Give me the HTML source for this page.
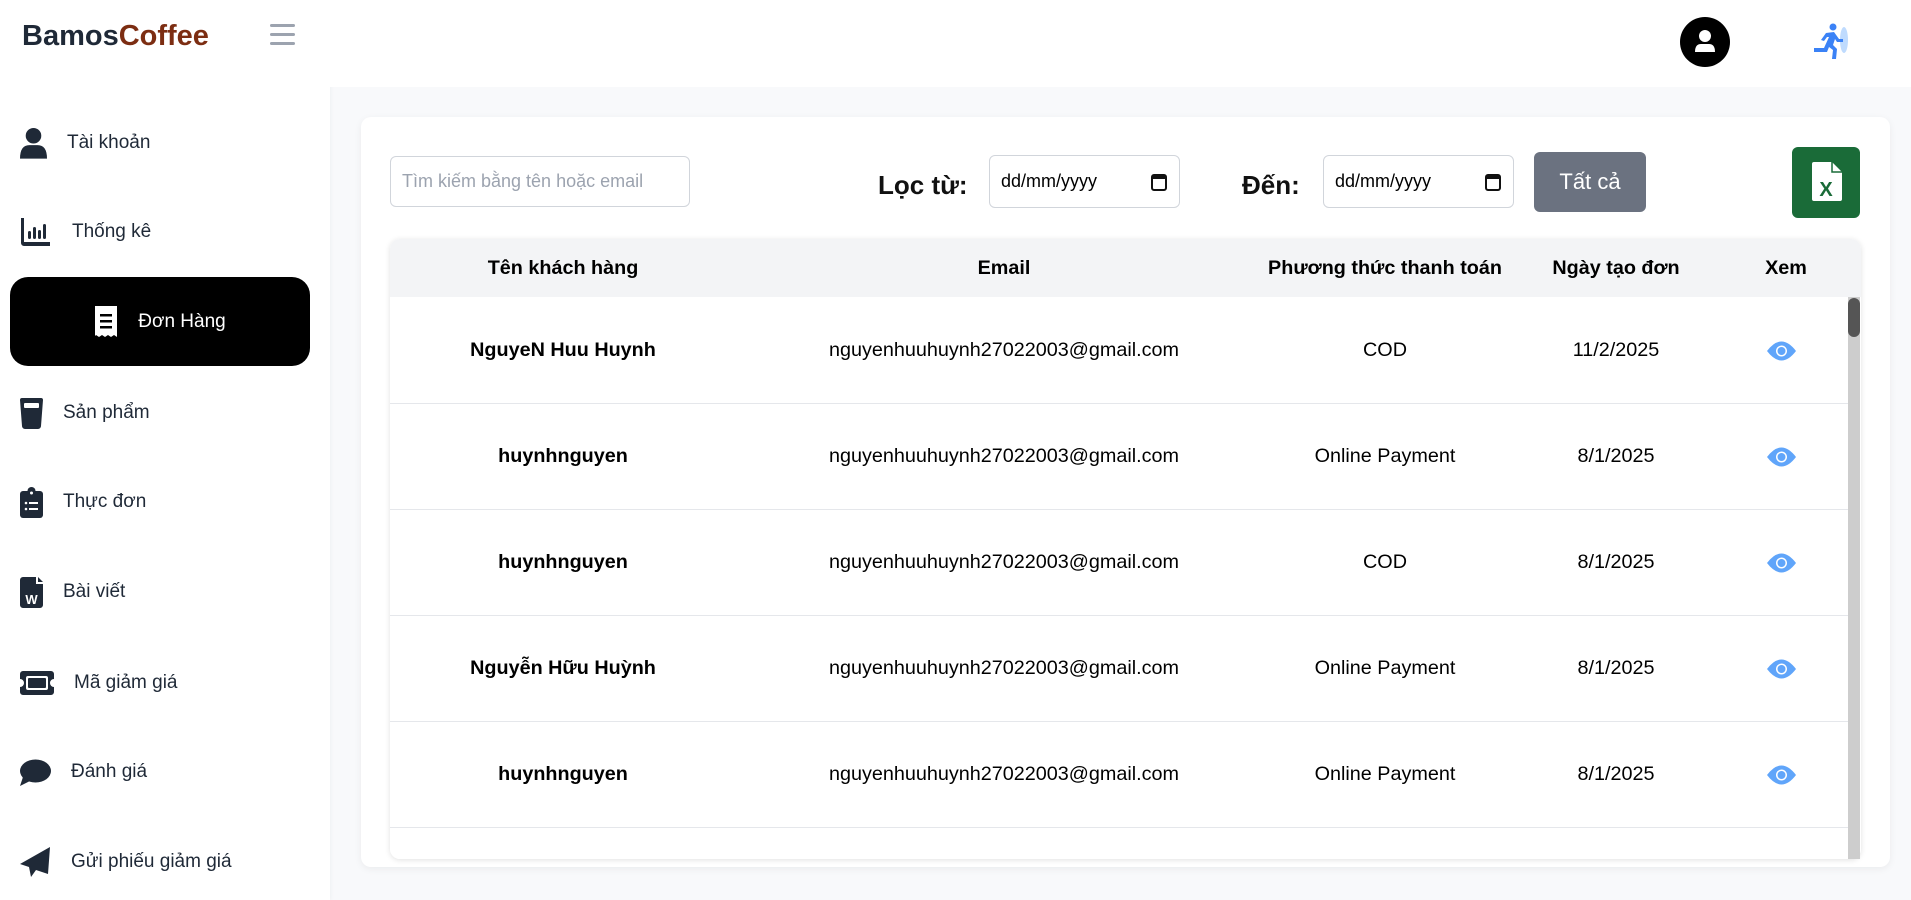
<!DOCTYPE html>
<html><head><meta charset="utf-8">
<style>
*{box-sizing:border-box;margin:0;padding:0}
body{width:1911px;height:900px;overflow:hidden;background:#f8f9fb;font-family:"Liberation Sans","Noto Sans CJK SC",sans-serif;position:relative;color:#000}
.abs{position:absolute}
#side{left:0;top:0;width:330px;height:900px;background:#fff;box-shadow:1px 0 4px rgba(0,0,0,0.04)}
.logo{left:22px;top:20px;font-size:29px;font-weight:bold;color:#1f2937;letter-spacing:0px}
.logo span{color:#7c2d12}
.ham{left:270px;top:24px;width:25px}
.ham i{display:block;height:3px;background:#9ca3af;margin-bottom:6px;border-radius:2px}
.mi{left:20px;height:40px;display:flex;align-items:center;font-size:19px;color:#1f2937}
.mi svg{fill:#1f2937}
.active{left:10px;top:277px;width:300px;height:89px;background:#000;border-radius:18px;color:#fff;display:flex;align-items:center;justify-content:center;font-size:19px}
#top{left:330px;top:0;width:1581px;height:87px;background:#fff}
.card{left:361px;top:117px;width:1529px;height:750px;background:#fff;border-radius:10px;box-shadow:0 2px 8px rgba(0,0,0,0.06)}
.tbl{left:390px;top:239px;width:1471px;height:620px;border-radius:10px;box-shadow:0 1px 6px rgba(0,0,0,0.12)}
.inp{border:1px solid #d1d5db;border-radius:6px;background:#fff;font-size:18px;display:flex;align-items:center}
.lbl{font-size:26px;font-weight:bold;color:#111}
.th{top:239px;left:390px;width:1471px;height:58px;background:#f3f4f6;border-radius:10px 10px 0 0}
.c{position:absolute;text-align:center;transform:translateX(-50%);white-space:nowrap;font-size:19.8px}
.b{font-weight:bold}
.row{left:390px;width:1458px;height:1px;background:#e5e7eb}
</style></head><body>
<div id="side" class="abs">
 <div class="abs logo">Bamos<span>Coffee</span></div>
 <div class="abs ham"><i></i><i></i><i></i></div>

 <div class="abs mi" style="top:123px"><svg width="27" height="32" viewBox="0 0 26 30"><circle cx="13" cy="8" r="7.5"/><path d="M0 30 Q0 17 9 17 H17 Q26 17 26 30Z"/></svg><span style="margin-left:20px">Tài khoản</span></div>
 <div class="abs mi" style="top:212px"><svg width="30" height="28" viewBox="0 0 30 28"><path d="M1 0h3v24h26v4H4a3 3 0 0 1-3-3z"/><rect x="8" y="13" width="3" height="8" rx="1.5"/><rect x="13" y="9" width="3" height="12" rx="1.5"/><rect x="18" y="12" width="3" height="9" rx="1.5"/><rect x="23" y="6" width="3" height="15" rx="1.5"/></svg><span style="margin-left:22px">Thống kê</span></div>
 <div class="abs active"><svg width="24" height="31" viewBox="0 0 24 31" style="margin-right:20px"><path fill="#fff" d="M1 0h22v31l-3-2-3 2-3-2-3 2-3-2-3 2-3-2-1 1z"/><rect x="6" y="8" width="12" height="2.5" fill="#000"/><rect x="6" y="14" width="12" height="2.5" fill="#000"/><rect x="6" y="20" width="12" height="2.5" fill="#000"/></svg>Đơn Hàng</div>
 <div class="abs mi" style="top:393px"><svg width="23" height="31" viewBox="0 0 23 31"><path d="M0 2a2 2 0 0 1 2-2h19a2 2 0 0 1 2 2l-2 26a3 3 0 0 1-3 3H5a3 3 0 0 1-3-3z"/><rect x="4" y="5" width="15" height="5" rx="1" fill="#fff"/></svg><span style="margin-left:20px">Sản phẩm</span></div>
 <div class="abs mi" style="top:482px"><svg width="23" height="31" viewBox="0 0 23 31"><rect x="0" y="4" width="23" height="27" rx="3"/><circle cx="11.5" cy="4" r="4"/><circle cx="11.5" cy="6" r="1.5" fill="#fff"/><circle cx="6" cy="16" r="1.3" fill="#fff"/><circle cx="6" cy="22" r="1.3" fill="#fff"/><rect x="9" y="15" width="9" height="2" fill="#fff"/><rect x="9" y="21" width="9" height="2" fill="#fff"/></svg><span style="margin-left:20px">Thực đơn</span></div>
 <div class="abs mi" style="top:572px"><svg width="23" height="31" viewBox="0 0 23 31"><path d="M3 0h13v7h7v21a3 3 0 0 1-3 3H3a3 3 0 0 1-3-3V3a3 3 0 0 1 3-3zM18 0l5 5h-5z"/><text x="11.5" y="27" font-size="13" font-weight="bold" fill="#fff" text-anchor="middle" font-family="Liberation Sans">W</text></svg><span style="margin-left:20px">Bài viết</span></div>
 <div class="abs mi" style="top:663px"><svg width="34" height="24" viewBox="0 0 34 24"><path d="M3 0h28a3 3 0 0 1 3 3v5a4 4 0 0 0 0 8v5a3 3 0 0 1-3 3H3a3 3 0 0 1-3-3v-5a4 4 0 0 0 0-8V3a3 3 0 0 1 3-3z"/><rect x="6" y="5" width="22" height="14" rx="2" fill="#fff"/><rect x="8" y="7" width="18" height="10" rx="1"/></svg><span style="margin-left:20px">Mã giảm giá</span></div>
 <div class="abs mi" style="top:752px"><svg width="31" height="27" viewBox="0 0 31 27"><ellipse cx="15.5" cy="12" rx="15.5" ry="11.5"/><path d="M3 18 L0 27 L10 22Z"/></svg><span style="margin-left:20px">Đánh giá</span></div>
 <div class="abs mi" style="top:842px"><svg width="30" height="30" viewBox="0 0 30 30"><path d="M30 0 L0 17 L9 20 L11 30 L16 23 L28 27Z"/></svg><span style="margin-left:21px">Gửi phiếu giảm giá</span></div>
</div>

<div id="top" class="abs"></div>
<svg class="abs" style="left:1680px;top:17px" width="50" height="50" viewBox="0 0 50 50"><circle cx="25" cy="25" r="25" fill="#000"/><circle cx="25" cy="19" r="6" fill="#fff"/><path d="M15 35 Q15 27 21 27 H29 Q35 27 35 35Z" fill="#fff"/></svg>
<svg class="abs" style="left:1812px;top:22px" width="40" height="40" viewBox="0 0 40 40"><ellipse cx="32" cy="18" rx="4" ry="13" fill="#bfdbfe"/><circle cx="21" cy="5" r="3.5" fill="#3b82f6"/><path d="M14 11 L22 10 L27 17 L31 17 L31 20 L25 20 L23 17 L21 23 L25 27 L24 37 L20 37 L21 28 L17 25 L15 30 L2 30 L2 26 L12 26 L17 15 L15 15 L12 19 L9 18Z" fill="#3b82f6"/></svg>

<div class="abs card"></div>
<div class="abs tbl"></div>
<div class="abs" style="left:390px;top:239px;width:1471px;height:620px;background:#fff;border-radius:10px"></div>
<div class="abs inp" style="left:390px;top:156px;width:300px;height:51px;padding-left:11px;color:#9ca3af;font-size:18px">Tìm kiếm bằng tên hoặc email</div>
<div class="abs lbl" style="left:878px;top:170px">Lọc từ:</div>
<div class="abs inp" style="left:989px;top:155px;width:191px;height:53px;padding-left:11px">dd/mm/yyyy<svg style="position:absolute;right:12px;top:17px" width="16" height="18" viewBox="0 0 16 18"><rect x="1" y="2" width="14" height="15" rx="2" fill="none" stroke="#111" stroke-width="2"/><rect x="1" y="2" width="14" height="4" fill="#111"/></svg></div>
<div class="abs lbl" style="left:1242px;top:170px">Đến:</div>
<div class="abs inp" style="left:1323px;top:155px;width:191px;height:53px;padding-left:11px">dd/mm/yyyy<svg style="position:absolute;right:12px;top:17px" width="16" height="18" viewBox="0 0 16 18"><rect x="1" y="2" width="14" height="15" rx="2" fill="none" stroke="#111" stroke-width="2"/><rect x="1" y="2" width="14" height="4" fill="#111"/></svg></div>
<div class="abs" style="left:1534px;top:152px;width:112px;height:60px;background:#6b7280;border-radius:6px;color:#fff;font-size:22px;display:flex;align-items:center;justify-content:center">Tất cả</div>
<div class="abs" style="left:1792px;top:147px;width:68px;height:71px;background:#1a6b38;border-radius:6px"><svg style="position:absolute;left:20px;top:15px" width="30" height="39" viewBox="0 0 30 39"><path d="M2 0h18l10 10v27a2 2 0 0 1-2 2H2a2 2 0 0 1-2-2V2a2 2 0 0 1 2-2z" fill="#fff"/><path d="M20 0v10h10" fill="none" stroke="#1a6b38" stroke-width="1.5"/><text x="14" y="34" font-size="20" font-weight="bold" fill="#1a6b38" text-anchor="middle" font-family="Liberation Sans">X</text></svg></div>

<div class="abs th"></div>
<div class="c b" style="left:563px;top:257px">Tên khách hàng</div>
<div class="c b" style="left:1004px;top:257px">Email</div>
<div class="c b" style="left:1385px;top:257px">Phương thức thanh toán</div>
<div class="c b" style="left:1616px;top:257px">Ngày tạo đơn</div>
<div class="c b" style="left:1786px;top:257px">Xem</div>

<div class="abs" style="left:1848px;top:297px;width:12px;height:562px;background:#cdcdcd"></div>
<div class="abs" style="left:1848px;top:298px;width:12px;height:39px;background:#555;border-radius:6px"></div>

<div class="abs row" style="top:403px"></div>
<div class="abs row" style="top:509px"></div>
<div class="abs row" style="top:615px"></div>
<div class="abs row" style="top:721px"></div>
<div class="abs row" style="top:827px"></div>

<div class="c b" style="left:563px;top:339px">NguyeN Huu Huynh</div>
<div class="c" style="left:1004px;top:339px">nguyenhuuhuynh27022003@gmail.com</div>
<div class="c" style="left:1385px;top:339px">COD</div>
<div class="c" style="left:1616px;top:339px">11/2/2025</div>

<div class="c b" style="left:563px;top:445px">huynhnguyen</div>
<div class="c" style="left:1004px;top:445px">nguyenhuuhuynh27022003@gmail.com</div>
<div class="c" style="left:1385px;top:445px">Online Payment</div>
<div class="c" style="left:1616px;top:445px">8/1/2025</div>

<div class="c b" style="left:563px;top:551px">huynhnguyen</div>
<div class="c" style="left:1004px;top:551px">nguyenhuuhuynh27022003@gmail.com</div>
<div class="c" style="left:1385px;top:551px">COD</div>
<div class="c" style="left:1616px;top:551px">8/1/2025</div>

<div class="c b" style="left:563px;top:657px">Nguyễn Hữu Huỳnh</div>
<div class="c" style="left:1004px;top:657px">nguyenhuuhuynh27022003@gmail.com</div>
<div class="c" style="left:1385px;top:657px">Online Payment</div>
<div class="c" style="left:1616px;top:657px">8/1/2025</div>

<div class="c b" style="left:563px;top:763px">huynhnguyen</div>
<div class="c" style="left:1004px;top:763px">nguyenhuuhuynh27022003@gmail.com</div>
<div class="c" style="left:1385px;top:763px">Online Payment</div>
<div class="c" style="left:1616px;top:763px">8/1/2025</div>

<svg class="abs" style="left:1767px;top:340px" width="29" height="22" viewBox="0 0 29 22"><path d="M0 11 Q14.5 -8 29 11 Q14.5 30 0 11Z" fill="#60a5fa"/><circle cx="14.5" cy="11" r="5.5" fill="#fff"/><circle cx="14.5" cy="11" r="4" fill="#60a5fa"/></svg>
<svg class="abs" style="left:1767px;top:446px" width="29" height="22" viewBox="0 0 29 22"><path d="M0 11 Q14.5 -8 29 11 Q14.5 30 0 11Z" fill="#60a5fa"/><circle cx="14.5" cy="11" r="5.5" fill="#fff"/><circle cx="14.5" cy="11" r="4" fill="#60a5fa"/></svg>
<svg class="abs" style="left:1767px;top:552px" width="29" height="22" viewBox="0 0 29 22"><path d="M0 11 Q14.5 -8 29 11 Q14.5 30 0 11Z" fill="#60a5fa"/><circle cx="14.5" cy="11" r="5.5" fill="#fff"/><circle cx="14.5" cy="11" r="4" fill="#60a5fa"/></svg>
<svg class="abs" style="left:1767px;top:658px" width="29" height="22" viewBox="0 0 29 22"><path d="M0 11 Q14.5 -8 29 11 Q14.5 30 0 11Z" fill="#60a5fa"/><circle cx="14.5" cy="11" r="5.5" fill="#fff"/><circle cx="14.5" cy="11" r="4" fill="#60a5fa"/></svg>
<svg class="abs" style="left:1767px;top:764px" width="29" height="22" viewBox="0 0 29 22"><path d="M0 11 Q14.5 -8 29 11 Q14.5 30 0 11Z" fill="#60a5fa"/><circle cx="14.5" cy="11" r="5.5" fill="#fff"/><circle cx="14.5" cy="11" r="4" fill="#60a5fa"/></svg>
</body></html>
